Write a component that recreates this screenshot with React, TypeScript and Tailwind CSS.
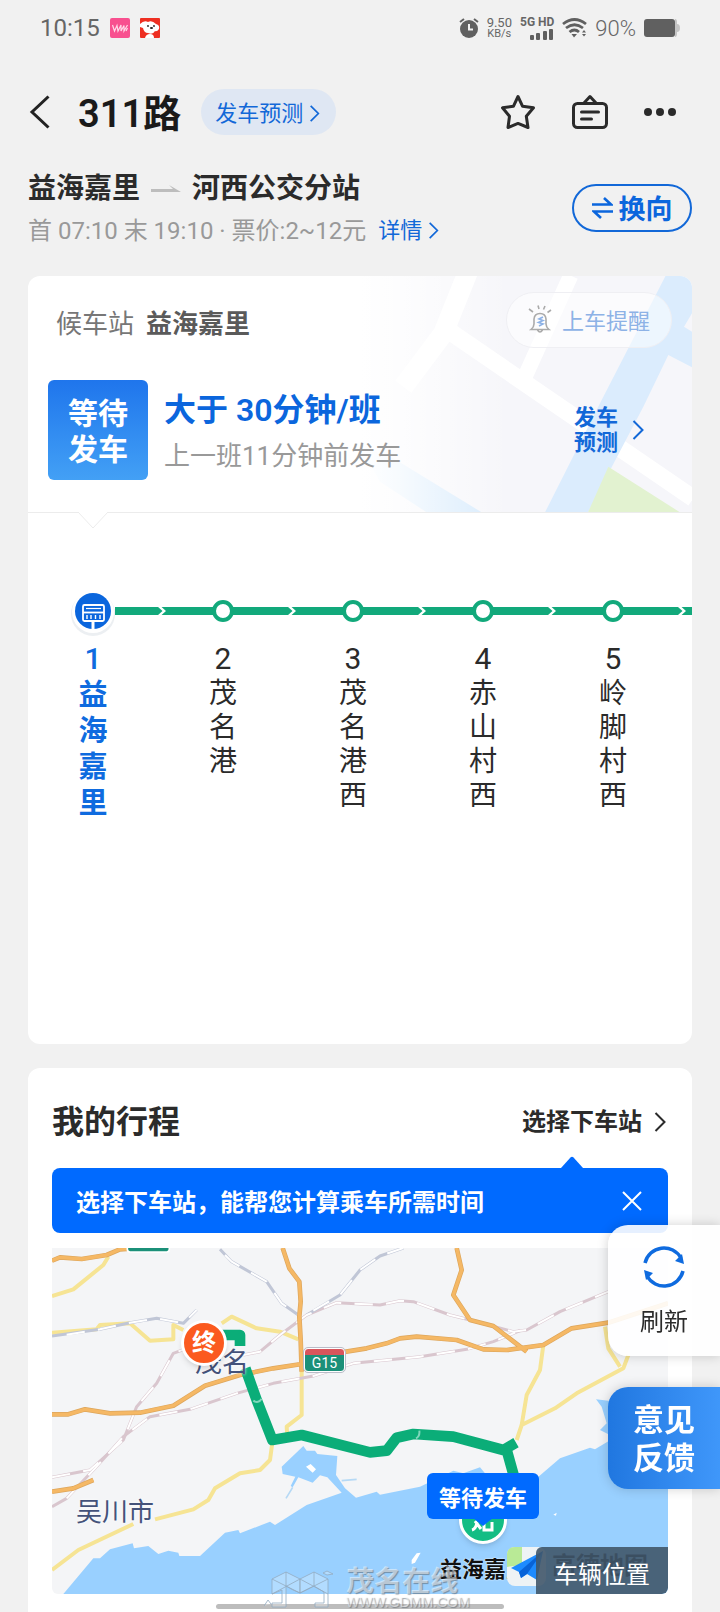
const stops = [
  { id: 1, name: "益海嘉里" },
  { id: 2, name: "茂名港" },
  { id: 3, name: "茂名港西" },
  { id: 4, name: "赤山村西" },
  { id: 5, name: "岭脚村西" },
];

function Chevron({ className }: { className: string }) {
  return (
    <svg className={className} viewBox="0 0 12 20" fill="none" stroke="currentColor" strokeWidth="2" aria-hidden>
      <path d="M1.5 1 L10.5 10 L1.5 19" />
    </svg>
  );
}

function StatusBar() {
  return (
    <div className="flex h-14 items-center justify-between px-10 text-[#666]">
      <div className="flex items-center gap-[10px]">
        <span className="text-2xl">10:15</span>
        <svg className="size-5" viewBox="0 0 20 20" aria-hidden>
          <rect width="20" height="20" rx="2" fill="#f8508f" />
          <path d="M2.5 7 L4.5 13 L7 7.5 L8 13 L11 7 L11 13 L14 7.5 L14 13 L17.5 7 M16 13 L17.5 10" fill="none" stroke="#ffd9e8" strokeWidth="1.2" />
        </svg>
        <svg className="size-5" viewBox="0 0 20 20" aria-hidden>
          <rect width="20" height="20" rx="1" fill="#ee2f22" />
          <path d="M0 6 Q4 2 8 4 Q12 2 16 6 Q20 7 19 11 Q17 14 15 13 Q13 17 8 15 Q4 15 3 10 L0 9 Z" fill="#fff" />
          <path d="M5 20 Q6 16 10 16 Q14 16 14 20 Z" fill="#fff" />
          <circle cx="8" cy="8" r="0.9" fill="#222" />
          <circle cx="14" cy="8" r="0.9" fill="#222" />
          <ellipse cx="11.5" cy="10" rx="1.6" ry="1.1" fill="#222" />
        </svg>
      </div>
      <div className="flex items-center gap-2">
        <svg className="size-5" viewBox="0 0 20 20" aria-hidden>
          <circle cx="10" cy="11" r="9" fill="#606060" />
          <path d="M1 4 L5 1 M19 4 L15 1" stroke="#606060" strokeWidth="2" />
          <path d="M10 6 V11.5 H14" fill="none" stroke="#f1f1f1" strokeWidth="2" />
        </svg>
        <div className="flex flex-col items-center text-[13px] leading-[11px]">
          <span>9.50</span>
          <span className="text-[11px]">KB/s</span>
        </div>
        <div className="flex flex-col items-end gap-px">
          <span className="text-xs font-bold leading-[11px]">5G HD</span>
          <svg className="h-[11px] w-6" viewBox="0 0 24 11" fill="#606060" aria-hidden>
            <rect x="0" y="6" width="4" height="5" rx="1" />
            <rect x="6" y="4" width="4" height="7" rx="1" />
            <rect x="13" y="2" width="4" height="9" rx="1" />
            <rect x="19" y="0" width="4" height="11" rx="1" />
          </svg>
        </div>
        <svg className="h-5 w-[25px]" viewBox="0 0 25 20" fill="none" stroke="#606060" strokeWidth="2.8" aria-hidden>
          <path d="M1 6 Q12.5 -3 24 6 M4 10 Q12.5 3.5 21 10 M7.5 14 Q12.5 10 17 14" />
          <path d="M9.5 16 H15 L12 19.5 Z M20 14.5 L22 12 L24 14.5 Z M20 16 L22 18.5 L24 16 Z" fill="#606060" stroke="none" />
        </svg>
        <span className="text-[22px] font-light">90%</span>
        <svg className="h-[18px] w-9" viewBox="0 0 36 18" aria-hidden>
          <rect width="31" height="18" rx="3" fill="#606060" />
          <path d="M31 0 Q33 0 33 3 V5 Q36 5 36 9 Q36 13 33 13 V15 Q33 18 31 18 Z" fill="#c4c4c4" />
        </svg>
      </div>
    </div>
  );
}

function Header() {
  return (
    <header>
      <div className="flex h-28 items-center justify-between px-7">
        <div className="flex items-center">
          <button type="button" aria-label="返回" className="flex w-[50px] items-center text-[#222]">
            <svg className="h-[34px] w-[22px]" viewBox="0 0 22 34" fill="none" stroke="currentColor" strokeWidth="3" aria-hidden>
              <path d="M20.5 1.5 L4 17 L20.5 32.5" />
            </svg>
          </button>
          <h1 className="pt-1 text-[38px] font-semibold leading-[56px] text-[#1a1a1a]">311路</h1>
          <button type="button" className="ml-5 flex h-[46px] items-center gap-1.5 rounded-full bg-[#dfe7f3] pl-3.5 pr-4 pt-0.5 text-[22px] text-[#1268d8]">
            发车预测
            <Chevron className="h-[17px] w-[11px]" />
          </button>
        </div>
        <div className="flex items-center gap-9 pr-4 text-[#2b2b2b]">
          <button type="button" aria-label="收藏">
            <svg className="size-9" viewBox="0 0 36 36" fill="none" stroke="currentColor" strokeWidth="3" strokeLinejoin="round" aria-hidden>
              <path d="M18 2.5 L22.6 12.3 L33.5 13.8 L26.3 22.3 L28 33.5 L18 29.4 L8 33.5 L9.5 22.3 L2.5 13.8 L13.4 12.3 Z" />
            </svg>
          </button>
          <button type="button" aria-label="站牌">
            <svg className="size-9" viewBox="0 0 36 36" fill="none" stroke="currentColor" strokeWidth="3" strokeLinecap="round" strokeLinejoin="round" aria-hidden>
              <rect x="1.5" y="9.5" width="33" height="24" rx="4" />
              <path d="M12 9 L18 2.5 L24 9 M9.5 18 H26.5 M9.5 25 H19.5" />
            </svg>
          </button>
          <button type="button" aria-label="更多">
            <svg className="h-9 w-8" viewBox="0 0 32 36" fill="currentColor" aria-hidden>
              <circle cx="4" cy="18" r="4" />
              <circle cx="16" cy="18" r="4" />
              <circle cx="28" cy="18" r="4" />
            </svg>
          </button>
        </div>
      </div>
      <div className="flex justify-between px-7">
        <div>
          <div className="flex h-[42px] items-center gap-[11px] text-[28px] font-semibold text-[#2b2b2b]">
            <span>益海嘉里</span>
            <svg className="h-2 w-[30px]" viewBox="0 0 30 8" fill="#bdbdbd" aria-hidden>
              <path d="M0 4 H22 L18 0 L30 7 H0 Z" />
            </svg>
            <span>河西公交分站</span>
          </div>
          <div className="flex h-[42px] items-center gap-3 text-2xl text-[#999]">
            <span>首 07:10 末 19:10 · 票价:2~12元</span>
            <a href="#detail" className="flex items-center gap-1.5 text-[22px] text-[#1268d8]">
              详情
              <Chevron className="h-[17px] w-[11px]" />
            </a>
          </div>
        </div>
        <button type="button" className="mt-4 flex h-12 w-[120px] items-center justify-center gap-1.5 rounded-full border-2 border-[#1268d8] pt-1 text-[27px] font-semibold text-[#0b66dd]">
          <svg className="mb-1 h-[22px] w-[21px]" viewBox="0 0 21 22" fill="none" stroke="currentColor" strokeWidth="2.6" aria-hidden>
            <path d="M0 7.5 H19 L12 1 M21 14.5 H2 L9 21" />
          </svg>
          换向
        </button>
      </div>
    </header>
  );
}

function HeadMap() {
  return (
    <svg className="absolute inset-y-0 right-0 h-full w-[332px]" viewBox="0 47 996 710" preserveAspectRatio="xMaxYMid slice" aria-hidden>
      <defs>
        <linearGradient id="fade" x1="0" x2="1">
          <stop offset="0" stopColor="#fff" />
          <stop offset="0.12" stopColor="#fff" stopOpacity="0.8" />
          <stop offset="0.45" stopColor="#fff" stopOpacity="0" />
        </linearGradient>
      </defs>
      <rect y="47" width="1000" height="710" fill="#f6f6fa" />
      <path d="M0 560 L100 595 L365 757 H200 L60 665 Z" fill="#d6eafc" />
      <path d="M270 215 L1000 715" fill="none" stroke="#fff" strokeWidth="52" />
      <path d="M330 20 L250 220 L130 380" fill="none" stroke="#fff" strokeWidth="60" />
      <path d="M632 47 L495 350" stroke="#fff" strokeWidth="46" />
      <path d="M555 757 L720 430 L917 47 H996 V160 L972 200 L996 215 V322 L925 285 L850 440 L684 757 Z" fill="#dbecfd" />
      <path d="M745 620 L960 757 H684 Z" fill="#e2f2d0" />
      <rect y="47" width="1000" height="710" fill="url(#fade)" />
    </svg>
  );
}

function StopLine() {
  return (
    <div className="flex overflow-hidden pt-[76px]">
      {stops.map((s, i) => (
        <div key={s.id} className={i === 0 ? "w-[130px] shrink-0 text-[#0f6bdf]" : "w-[130px] shrink-0 text-[#2b2b2b]"}>
          <svg className="h-11 w-[130px] overflow-visible" viewBox="0 0 130 44" aria-hidden>
            {i === 0 ? (
              <>
                <path d="M87 22 H131" stroke="#12a97b" strokeWidth="8" />
                <circle cx="65" cy="25" r="22" fill="#d9dfe6" opacity="0.5" />
                <circle cx="65" cy="23" r="21" fill="#fff" />
                <circle cx="65" cy="22" r="18" fill="#0b66dd" />
                <rect x="55" y="16" width="21" height="16" rx="1.5" fill="none" stroke="#fff" strokeWidth="1.8" />
                <path d="M58 19.5 H73" stroke="#fff" strokeWidth="1.2" />
                <path d="M55 23.5 H76" stroke="#fff" strokeWidth="1.8" />
                <path d="M59 26 V30 M63 26 V30 M67.5 26 V30 M72 26 V30" stroke="#fff" strokeWidth="1.4" />
                <path d="M65 32 V40" stroke="#fff" strokeWidth="3" />
              </>
            ) : (
              <>
                <path d="M0 22 H131" stroke="#12a97b" strokeWidth="8" />
                <path d="M-0.5 17.5 L4.5 22 L-0.5 26.5 H3 L8 22 L3 17.5 Z" fill="#fff" />
                <circle cx="65" cy="22" r="9" fill="#fff" stroke="#12a97b" strokeWidth="4" />
              </>
            )}
          </svg>
          <p className={i === 0 ? "mt-2 text-center text-[30px] font-medium leading-9" : "mt-2 text-center text-[30px] leading-9"}>{s.id}</p>
          <p className={i === 0 ? "mx-auto w-9 break-all text-center text-[29px] font-bold leading-9" : "mx-auto w-9 break-all text-center text-[28px] leading-[34px]"}>
            {s.name}
          </p>
        </div>
      ))}
      <svg className="h-11 w-[130px] shrink-0" viewBox="0 0 130 44" aria-hidden>
        <path d="M0 22 H130" stroke="#12a97b" strokeWidth="8" />
        <path d="M-0.5 17.5 L4.5 22 L-0.5 26.5 H3 L8 22 L3 17.5 Z" fill="#fff" />
      </svg>
    </div>
  );
}

function WaitCard() {
  return (
    <section className="mx-7 mt-6 min-h-[768px] overflow-hidden rounded-xl bg-white">
      <div className="relative border-b border-[#ececec] pb-8">
        <HeadMap />
        <div className="relative flex h-[92px] items-center justify-between pl-7 pr-5">
          <p className="flex gap-3 pt-1 text-[26px] text-[#777]">
            候车站 <strong className="font-semibold text-[#5a5a5a]">益海嘉里</strong>
          </p>
          <button type="button" className="mb-1 flex h-14 w-[166px] items-center justify-center gap-2.5 rounded-full border border-[#efeff3] bg-white/50 pt-0.5 text-[22px] text-[#8db2e6]">
            <svg className="mb-1 h-7 w-6" viewBox="0 0 24 28" fill="none" stroke="#aaa" strokeWidth="1.6" aria-hidden>
              <path d="M3 24.5 H21 Q18 22 18 19 V14 Q17.5 8.5 12 8.5 Q6.5 8.5 6 14 V19 Q6 22 3 24.5 Z M9.5 25 Q12 29 14.5 25" />
              <path d="M10 0.5 L11 4 M17 1 L15.5 4.5 M23 5 L19.5 7.5 M1 4 L5 7" />
              <path d="M15 12 L11 14 L15 15.5 L10.5 17.5 L15 19 L11 21" stroke="#8db2e6" />
            </svg>
            上车提醒
          </button>
        </div>
        <div className="relative mt-3 flex items-center pl-5 pr-12">
          <div className="flex size-[100px] shrink-0 items-center justify-center rounded-md bg-linear-to-b from-[#1f75ec] to-[#43a0f5] pt-1 text-center text-[30px] font-semibold leading-9 text-white">
            等待
            <br />
            发车
          </div>
          <div className="ml-4 flex-1 pt-1.5">
            <p className="text-[32px] font-semibold leading-[46px] text-[#0b66dd]">大于 30分钟/班</p>
            <p className="text-[26px] leading-[46px] text-[#999]">上一班11分钟前发车</p>
          </div>
          <button type="button" className="flex items-center gap-3.5 text-[22px] font-semibold leading-[25px] text-[#1268d8]">
            <span>
              发车
              <br />
              预测
            </span>
            <Chevron className="h-5 w-3" />
          </button>
        </div>
        <svg className="absolute left-[49px] top-full h-[18px] w-8" viewBox="0 0 32 18" fill="#fff" stroke="#ececec" aria-hidden>
          <path d="M1 0 L16 16 L31 0" />
          <path d="M2 0 H30" stroke="#fff" strokeWidth="2" />
        </svg>
      </div>
      <StopLine />
    </section>
  );
}

function MapDrawing() {
  return (
    <svg className="absolute inset-0 size-full" viewBox="36 24 1848 1038" preserveAspectRatio="xMinYMin slice" fill="none" strokeLinejoin="round" aria-hidden>
      <rect x="36" y="24" width="1848" height="1038" fill="#f4f5f7" />
      <g fill="#99d0ff">
        <path d="M70 1062 L160 955 H180 L210 928 L278 910 L282 925 L325 918 L355 942 L385 932 L415 938 L418 948 H480 L555 878 L595 870 L600 880 L690 845 L705 855 L800 795 L905 758 L862 712 L840 706 L818 728 L775 712 L758 742 L752 738 L766 710 L728 702 L725 680 L790 618 L800 632 L825 632 L832 642 L892 648 L888 705 L915 745 L948 773 L1010 755 L1020 764 L1140 740 L1240 692 L1270 700 L1320 682 L1335 700 L1490 715 L1560 655 L1650 623 L1665 628 L1705 604 L1884 540 V1062 Z" />
        <path d="M1668 478 L1705 482 L1884 460 V600 L1720 590 L1680 570 L1700 550 L1685 500 Z" />
      </g>
      <path d="M798 680 L812 672 L828 688 L818 698 Z M1115 960 L1130 940 L1142 938 L1125 968 L1115 972 Z M1540 824 L1550 818 L1548 827 Z" fill="#fff" />
      <path d="M758 742 L738 775 M905 722 L950 718" stroke="#b6d9f5" strokeWidth="5" />
      <g stroke="#f6e494" strokeWidth="12">
        <path d="M36 168 L100 148 L190 75 L205 50" />
        <path d="M36 278 L170 268 L180 255 L270 250 L330 302 L400 298 L400 255 L430 270" />
        <path d="M545 250 L575 230 L650 265 L720 275 L775 298" />
        <path d="M785 380 L785 525 L740 560 L742 590 M698 600 L690 660 L660 690 L600 700 L525 745 L505 780 L460 808 L345 838" />
        <path d="M36 990 L115 930 L280 852" />
        <path d="M1510 315 L1500 390 L1460 465 L1445 555 L1430 600 M1445 555 L1545 505 L1610 460 L1750 385 L1765 345" />
        <path d="M1695 260 L1705 325 L1740 380" />
      </g>
      <g stroke="#d9c6ce" strokeWidth="9">
        <path d="M36 712 L150 690 L250 600 L290 500 L350 430 L400 340 L440 325" />
        <path d="M610 345 L660 335 L720 285 L800 225 L890 188 L1020 195 L1080 182 L1120 185 L1230 225 L1290 240 L1420 275 L1460 270 L1560 215 L1705 155" />
        <path d="M36 800 L80 775 L165 685 L250 590 L330 530 L450 508 L590 460 L700 430 L820 408 L940 370 L1140 350 L1280 328 L1360 305 L1440 272" />
      </g>
      <g stroke="#c0c6d6" strokeWidth="9">
        <path d="M540 28 L575 65 L680 125 L725 190 L775 225" />
        <path d="M800 225 L900 165 L960 90 L1020 48 L1090 24" />
        <path d="M36 288 L180 268 L270 248 L350 235 L430 250 L470 210" />
      </g>
      <g stroke="#fff" strokeWidth="6" strokeDasharray="55 40">
        <path d="M36 712 L150 690 L250 600 L290 500 L350 430 L400 340 L440 325" />
        <path d="M610 345 L660 335 L720 285 L800 225 L890 188 L1020 195 L1080 182 L1120 185 L1230 225 L1290 240 L1420 275 L1460 270 L1560 215 L1705 155" />
        <path d="M80 775 L165 685 L250 590 L330 530 L450 508 L590 460 L700 430 L820 408 L940 370 L1140 350 L1280 328 L1360 305 L1440 272" />
        <path d="M555 45 L575 65 L680 125 L725 190 L775 225" />
        <path d="M820 212 L900 165 L960 90 L1020 48 L1090 24" />
        <path d="M80 284 L180 268 L270 248 L350 235 L430 250 L470 210" />
      </g>
      <g stroke="#dda65c" strokeWidth="14">
        <path id="orange" d="M36 62 L60 52 L125 57 L200 45 L240 28 L300 24 M728 24 L748 85 L778 125 L782 185 L778 230 L782 300 L785 395 M36 523 L85 523 L135 508 L210 520 L300 518 L400 497 L495 437 L600 405 L700 385 L785 372 M900 338 L980 325 L1040 310 L1080 295 L1130 290 L1250 300 L1330 328 L1400 330 L1510 315 L1595 265 L1705 248 L1884 190 M1250 24 L1265 90 L1240 165 L1290 240 L1360 258 L1460 335 M36 755 L100 745 L160 720" />
        <use href="#orange" stroke="#f5b865" strokeWidth="10" />
      </g>
      <g stroke="#0bad78" strokeWidth="32">
        <path d="M545 285 L600 285 L600 318 M616 385 L650 480 L697 600 L785 585 L990 637 L1040 632 L1070 593 L1120 582 L1240 590 L1390 630 L1428 608 M1400 630 L1425 720" />
      </g>
      <path d="M640 482 Q655 492 665 476 M1128 595 Q1140 590 1138 572" stroke="#7fd6bb" strokeWidth="6" />
      <rect x="262" y="-20" width="126" height="56" rx="8" fill="#1b9079" stroke="#fff" strokeWidth="5" />
    </svg>
  );
}

function RouteMap() {
  return (
    <div className="relative mt-[15px] h-[346px] overflow-hidden rounded-b-md">
      <MapDrawing />
      <span className="absolute left-6 top-[246px] text-[26px] leading-9 text-[#44527a] text-shadow-[0_0_3px_#fff]">吴川市</span>
      <span className="absolute left-[143px] top-[97px] text-[27px] leading-9 text-[#44527a] text-shadow-[0_0_3px_#fff]">茂名</span>
      <span className="absolute left-[252px] top-[100px] flex h-6 w-[41px] items-end justify-center rounded border border-white bg-linear-to-b from-[#d9555c] from-25% to-[#1b9079] to-25% text-sm leading-4 text-white outline outline-[#b9bcc8]">
        G15
      </span>
      <span className="absolute left-[129px] top-[72px] flex size-[46px] items-center justify-center rounded-full border-[3px] border-white bg-[#fb5a1f] text-2xl font-bold text-white shadow-md">终</span>
      <span className="absolute left-[407px] top-[248px] flex size-12 items-end justify-center rounded-full border-[3px] border-white bg-[#14bd84] shadow-md">
        <svg className="mb-2 h-4 w-6" viewBox="0 0 24 16" fill="none" stroke="#fff" strokeWidth="3" aria-hidden>
          <path d="M1 13 Q5 12 6 5 M4 4 L10 12 M13 5 V13 H21 V5" />
        </svg>
      </span>
      <span className="absolute left-[375px] top-[225px] flex h-[46px] w-28 items-center justify-center rounded-md bg-[#006aff] pt-1 text-[22px] font-semibold text-white">等待发车</span>
      <svg className="absolute left-[421px] top-[270px] h-2 w-5" viewBox="0 0 20 8" fill="#006aff" aria-hidden>
        <path d="M0 0 H20 L10 8 Z" />
      </svg>
      <span className="absolute left-[388px] top-[306px] text-[22px] font-bold leading-8 text-[#111] text-shadow-[0_0_2px_#fff]">益海嘉里</span>
      <svg className="absolute left-[455px] top-[299px] size-[39px]" viewBox="0 0 39 39" aria-hidden>
        <rect width="39" height="39" rx="8" fill="#eef3f5" />
        <path d="M0 20 V8 Q0 0 8 0 H15 V18 Z" fill="#b9ea96" />
        <path d="M36 4 L4 21 L12 25 L14 31 L20 27 L30 33 Z" fill="#1d8bff" />
        <path d="M36 4 L12 25 L14 31 L20 27 Z" fill="#0863d8" />
      </svg>
      <span className="absolute right-5 top-[300px] text-2xl font-bold leading-9 text-[#111]">高德地图</span>
      <button type="button" className="absolute bottom-0 right-0 flex h-[47px] w-[132px] items-center justify-center rounded-tl-md rounded-br-md bg-[#40566a]/90 pt-2 text-2xl text-white">车辆位置</button>
    </div>
  );
}

function TripCard() {
  return (
    <section className="mx-7 mt-6 rounded-t-xl bg-white px-6 pb-[18px]">
      <div className="flex h-[100px] items-center justify-between pt-2">
        <h2 className="text-[32px] font-semibold text-[#2b2b2b]">我的行程</h2>
        <button type="button" className="flex items-center gap-3 pr-0.5 text-2xl font-semibold text-[#2b2b2b]">
          选择下车站
          <Chevron className="h-5 w-3" />
        </button>
      </div>
      <div className="relative flex h-[65px] items-center justify-between rounded-lg bg-[#006aff] px-6 pt-1 text-2xl font-semibold text-white">
        <svg className="absolute bottom-full right-[85px] h-3 w-[22px]" viewBox="0 0 22 12" fill="#006aff" aria-hidden>
          <path d="M0 12 L9.5 1.5 Q11 0 12.5 1.5 L22 12 Z" />
        </svg>
        <span>选择下车站，能帮您计算乘车所需时间</span>
        <button type="button" aria-label="关闭" className="pb-1 pr-0.5">
          <svg className="size-5" viewBox="0 0 20 20" fill="none" stroke="currentColor" strokeWidth="2" aria-hidden>
            <path d="M1 1 L19 19 M19 1 L1 19" />
          </svg>
        </button>
      </div>
      <RouteMap />
    </section>
  );
}

function FloatingButtons() {
  return (
    <div className="fixed bottom-[123px] right-0 flex w-28 flex-col gap-[31px]">
      <button type="button" className="flex h-[131px] flex-col items-center rounded-l-[20px] bg-white/90 pt-5 text-2xl text-[#2b2b2b] shadow-[0_0_12px_rgba(0,0,0,0.18)]">
        <svg className="h-[43px] w-[42px]" viewBox="0 0 42 43" fill="none" stroke="#0f6bdf" strokeWidth="3.5" aria-hidden>
          <path d="M2 18 A19.5 19.5 0 0 1 38 13 M40 26 A19.5 19.5 0 0 1 4 31" />
          <path d="M41 19 L32 16 L39 9 Z M1 25 L10 28 L3 35 Z" fill="#0f6bdf" stroke="none" />
        </svg>
        <span className="mt-4 leading-9">刷新</span>
      </button>
      <button type="button" className="h-[102px] rounded-l-[20px] bg-linear-to-r from-[#2077e0] to-[#3f97fa] pt-1 text-[31px] font-semibold leading-[38px] text-white shadow-[0_0_12px_rgba(0,0,0,0.18)]">
        意见
        <br />
        反馈
      </button>
    </div>
  );
}

function Watermark() {
  return (
    <div className="pointer-events-none absolute bottom-1 left-[264px] flex items-end gap-3 text-white/50">
      <svg className="h-[38px] w-[70px]" viewBox="0 0 70 38" fill="rgba(255,255,255,0.25)" stroke="#93abc0" strokeWidth="0.8" aria-hidden>
        <path d="M8 9 L22 2 L36 9 V23 L29 20 L22 16 V37 H8 V33 H18 V20 L8 24 Z" />
        <path d="M36 9 L50 2 L64 9 V37 H51 V33 H60 V22 L50 16 L36 23 Z" />
        <path d="M8 9 L36 23 M36 9 L8 24 M22 2 V16 M36 9 L64 24 M64 9 L36 23 M50 2 V16 M59 3 L63 1 L69 4 L63 5 Z M0 36 L4 30 L7 34" />
      </svg>
      <div className="flex flex-col text-shadow-[1px_1px_1px_rgba(90,100,110,0.6)]">
        <span className="text-[28px] font-bold leading-7">茂名在线</span>
        <span className="text-sm leading-3 font-['Liberation_Sans',sans-serif]">WWW.GDMM.COM</span>
      </div>
    </div>
  );
}

export default function App() {
  return (
    <div className="relative overflow-hidden bg-[#f1f1f1] font-[Roboto,'Noto_Sans_CJK_SC',sans-serif]">
      <StatusBar />
      <Header />
      <main>
        <WaitCard />
        <TripCard />
      </main>
      <FloatingButtons />
      <div className="absolute inset-x-[216px] bottom-[3px] h-[5px] rounded-full bg-[#bdbdbd]" />
      <Watermark />
    </div>
  );
}
